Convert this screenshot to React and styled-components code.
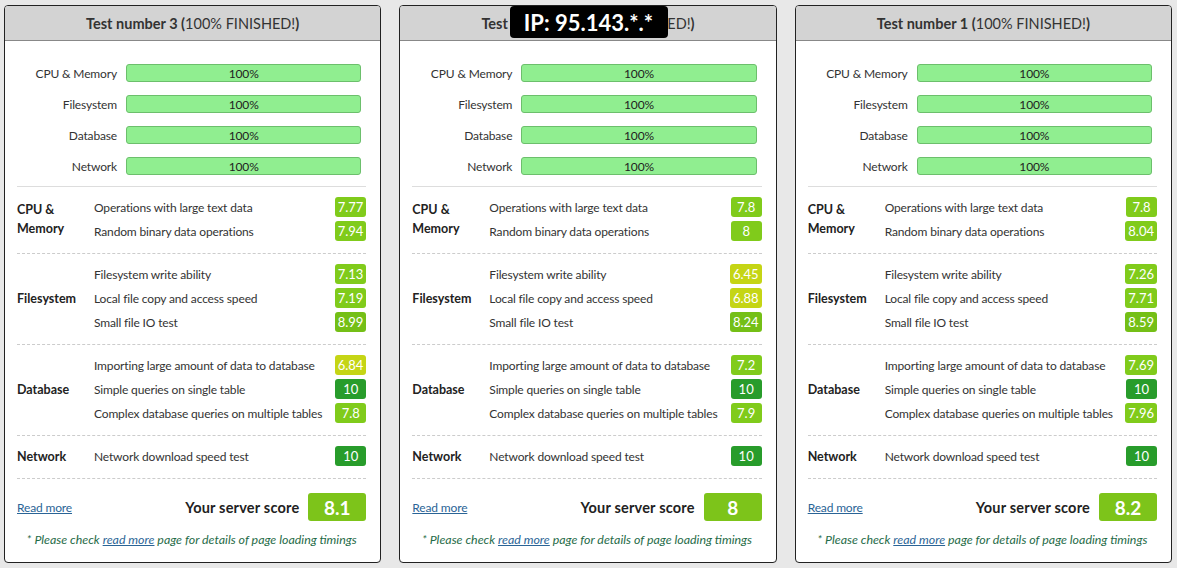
import React from "react";
import styled, { createGlobalStyle } from "styled-components";

const GlobalStyle = createGlobalStyle`
  html, body {
    margin: 0;
    padding: 0;
    background: #e8e8e8;
  }
  body {
    font-family: "Lato", "Noto Sans", sans-serif;
    color: #333;
  }
`;

const tests = [
  {
    number: 3,
    total: 8.1,
    groups: [
      { name: "CPU & Memory", rows: [["Operations with large text data", 7.77], ["Random binary data operations", 7.94]] },
      { name: "Filesystem", rows: [["Filesystem write ability", 7.13], ["Local file copy and access speed", 7.19], ["Small file IO test", 8.99]] },
      { name: "Database", rows: [["Importing large amount of data to database", 6.84], ["Simple queries on single table", 10], ["Complex database queries on multiple tables", 7.8]] },
      { name: "Network", rows: [["Network download speed test", 10]] },
    ],
  },
  {
    number: 2,
    total: 8,
    groups: [
      { name: "CPU & Memory", rows: [["Operations with large text data", 7.8], ["Random binary data operations", 8]] },
      { name: "Filesystem", rows: [["Filesystem write ability", 6.45], ["Local file copy and access speed", 6.88], ["Small file IO test", 8.24]] },
      { name: "Database", rows: [["Importing large amount of data to database", 7.2], ["Simple queries on single table", 10], ["Complex database queries on multiple tables", 7.9]] },
      { name: "Network", rows: [["Network download speed test", 10]] },
    ],
  },
  {
    number: 1,
    total: 8.2,
    groups: [
      { name: "CPU & Memory", rows: [["Operations with large text data", 7.8], ["Random binary data operations", 8.04]] },
      { name: "Filesystem", rows: [["Filesystem write ability", 7.26], ["Local file copy and access speed", 7.71], ["Small file IO test", 8.59]] },
      { name: "Database", rows: [["Importing large amount of data to database", 7.69], ["Simple queries on single table", 10], ["Complex database queries on multiple tables", 7.96]] },
      { name: "Network", rows: [["Network download speed test", 10]] },
    ],
  },
];

const progress = ["CPU & Memory", "Filesystem", "Database", "Network"];

// score -> badge colour
const scoreColor = (s) => {
  if (s >= 9.5) return "#289c2b";
  if (s >= 8.2) return "#74bf16";
  if (s >= 7) return "#80cb1b";
  return "#c5d515";
};

const Page = styled.div`
  display: flex;
  gap: 18px;
  padding: 5px 5px 4px 4px;
  position: relative;
`;

const Card = styled.div`
  flex: 1;
  background: #fff;
  border: 1px solid #222;
  border-radius: 4px;
  overflow: hidden;
`;

const Header = styled.div`
  height: 34px;
  background: #d3d3d3;
  border-bottom: 1px solid #888;
  display: flex;
  align-items: center;
  justify-content: center;
  font-size: 14.5px;
  color: #333;
`;

const Bold = styled.b`
  font-weight: 700;
`;

const Body = styled.div`
  padding: 0 14px 0 12px;
  font-size: 12px;
  letter-spacing: -0.15px;
`;

const ProgressList = styled.div`
  display: flex;
  flex-direction: column;
  gap: 13px;
  padding: 23px 0 11px;
  border-bottom: 1px solid #ddd;
`;

const ProgressRow = styled.div`
  display: flex;
  align-items: center;
  gap: 9px;
`;

const ProgressLabel = styled.div`
  width: 100px;
  text-align: right;
`;

const Bar = styled.div`
  flex: 1;
  margin-right: 5px;
  height: 16px;
  background: #90ee90;
  border: 1px solid #6cbf6c;
  border-radius: 3px;
  display: flex;
  align-items: center;
  justify-content: center;
  color: #222;
`;

const Group = styled.div`
  display: flex;
  align-items: center;
  padding: 8px 0 10px;
  border-bottom: 1px dashed #ccc;
`;

const GroupName = styled.div`
  width: 77px;
  font-weight: 700;
  font-size: 12.5px;
  line-height: 19px;
  letter-spacing: 0;
  color: #222;
`;

const Rows = styled.div`
  flex: 1;
  display: flex;
  flex-direction: column;
`;

const Row = styled.div`
  height: 24px;
  display: flex;
  align-items: center;
  justify-content: space-between;
  white-space: nowrap;
`;

const Badge = styled.span`
  min-width: 31px;
  height: 20px;
  padding: 0 3px;
  box-sizing: border-box;
  border-radius: 3px;
  background: ${(p) => p.$bg};
  color: #fff;
  display: flex;
  align-items: center;
  justify-content: center;
  font-size: 13px;
  letter-spacing: 0;
`;

const Footer = styled.div`
  display: flex;
  align-items: center;
  padding-top: 14px;
`;

const Link = styled.a`
  color: #2a6496;
  text-decoration: underline;
  cursor: pointer;
`;

const ScoreLabel = styled.div`
  margin-left: auto;
  font-weight: 700;
  font-size: 14.5px;
  color: #222;
  letter-spacing: 0.2px;
`;

const ScoreBox = styled.div`
  margin-left: 9px;
  width: 58px;
  height: 28px;
  border-radius: 3px;
  background: #7dc41a;
  color: #fff;
  display: flex;
  align-items: center;
  justify-content: center;
  font-size: 19px;
  font-weight: 700;
  letter-spacing: 0;
`;

const Note = styled.div`
  text-align: center;
  font-style: italic;
  font-size: 12.4px;
  letter-spacing: 0;
  color: #1f6b48;
  padding: 11px 0 15px;
`;

const IpTag = styled.div`
  position: absolute;
  top: 6px;
  left: 50%;
  transform: translateX(-50%);
  width: 158px;
  height: 32px;
  background: #000;
  color: #fff;
  border-radius: 4px;
  display: flex;
  align-items: center;
  justify-content: center;
  font-size: 22px;
  font-weight: 700;
`;

const TestCard = ({ test }) => (
  <Card>
    <Header>
      <Bold>Test number {test.number}&nbsp;(</Bold>100% FINISHED!<Bold>)</Bold>
    </Header>
    <Body>
      <ProgressList>
        {progress.map((p) => (
          <ProgressRow key={p}>
            <ProgressLabel>{p}</ProgressLabel>
            <Bar>100%</Bar>
          </ProgressRow>
        ))}
      </ProgressList>
      {test.groups.map((g) => (
        <Group key={g.name}>
          <GroupName>{g.name}</GroupName>
          <Rows>
            {g.rows.map(([label, score]) => (
              <Row key={label}>
                <span>{label}</span>
                <Badge $bg={scoreColor(score)}>{score}</Badge>
              </Row>
            ))}
          </Rows>
        </Group>
      ))}
      <Footer>
        <Link>Read more</Link>
        <ScoreLabel>Your server score</ScoreLabel>
        <ScoreBox>{test.total}</ScoreBox>
      </Footer>
      <Note>
        * Please check <Link>read more</Link> page for details of page loading timings
      </Note>
    </Body>
  </Card>
);

export default function App() {
  return (
    <>
      <GlobalStyle />
      <Page>
        {tests.map((t) => (
          <TestCard key={t.number} test={t} />
        ))}
        <IpTag>IP: 95.143.*.*</IpTag>
      </Page>
    </>
  );
}
